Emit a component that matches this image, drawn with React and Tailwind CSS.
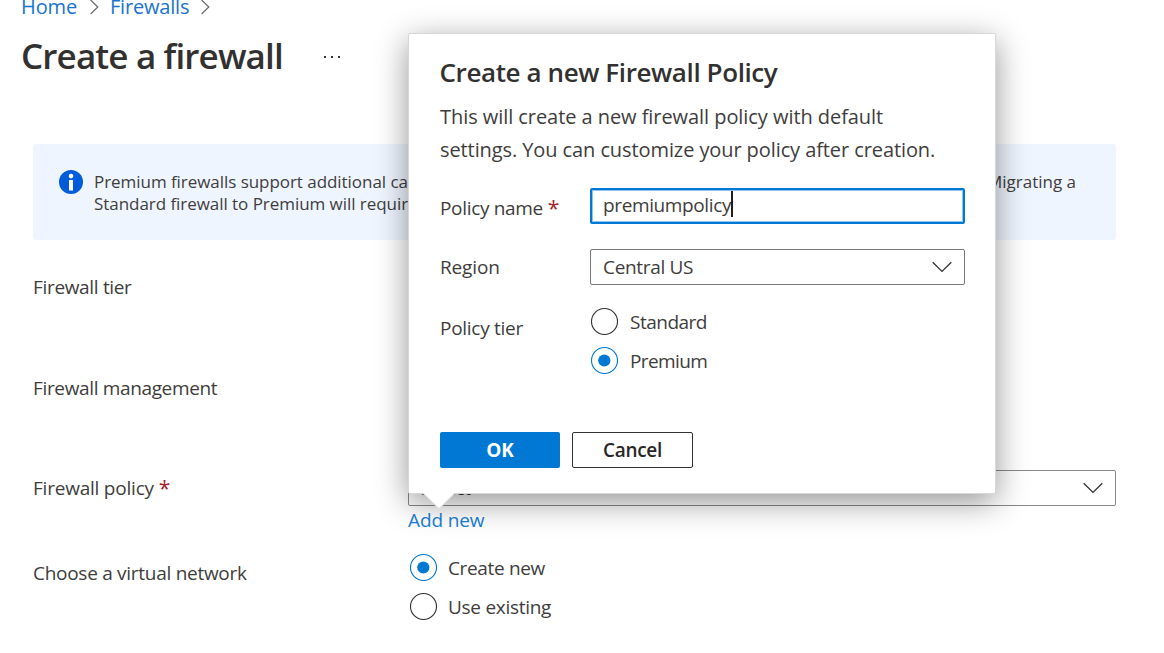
import React from "react";

function Radio({ checked, label, labelClass }) {
  return (
    <label className="flex h-[39px] items-center">
      <svg className="-mt-[1px] h-[28px] w-[28px] shrink-0" viewBox="0 0 28 28" fill="none">
        <circle cx="14.5" cy="14.5" r="13" fill="#fff" stroke={checked ? "#0078d4" : "#323130"} strokeWidth="1.1" />
        {checked && <circle cx="14.3" cy="14.5" r="6.1" fill="#0078d4" />}
      </svg>
      <span className={labelClass}>{label}</span>
    </label>
  );
}

function ChevronDown() {
  return (
    <svg className="h-[12px] w-[20px] shrink-0" viewBox="0 0 20 12" fill="none">
      <path d="M0.7 1.2 L10 10.4 L19.3 1.2" stroke="#323130" strokeWidth="1.3" />
    </svg>
  );
}

function ChevronRight() {
  return (
    <svg className="h-[16px] w-[9px] shrink-0" viewBox="0 0 9 16" fill="none">
      <path d="M0.6 1 L7.8 8 L0.6 15" stroke="#6b6966" strokeWidth="1.2" />
    </svg>
  );
}

function Dialog() {
  return (
    <div className="absolute top-[33px] left-[408px] h-[461px] w-[588px] rounded-[2px] border border-[#d8d8d8] bg-white pl-[31px] shadow-[0_8px_32px_rgba(0,0,0,0.42)]">
      <h2 className="mt-[20px] -ml-[0.5px] h-[36px] text-[26px] leading-[36px] font-semibold tracking-[-0.4px] whitespace-nowrap text-[#323130]">
        Create a new Firewall Policy
      </h2>
      <p className="mt-[10px] text-[20px] leading-[33px] whitespace-nowrap">
        <span className="block tracking-[-0.06px]">This will create a new firewall policy with default</span>
        <span className="block tracking-[-0.09px]">settings. You can customize your policy after creation.</span>
      </p>

      <div className="mt-[22px] flex h-[36px] items-center">
        <div className="flex w-[150px] items-center gap-[5px] pt-[3px]">
          <span className="tracking-[-0.33px]">Policy name</span>
          <span className="text-[21px] text-[#a4262c]">*</span>
        </div>
        <div className="flex h-[36px] w-[375px] items-center rounded-[2px] border-2 border-[#0078d4] bg-white pl-[11px] shadow-[inset_0_0_0_1px_#8fc3ec]">
          <span className="-mt-[3px] tracking-[-0.38px]">premiumpolicy</span>
          <span className="-mt-[4px] h-[26px] w-[2px] bg-[#201f1e]" />
        </div>
      </div>

      <div className="mt-[25px] flex h-[36px] items-center">
        <span className="w-[150px] tracking-[-0.15px]">Region</span>
        <div className="flex h-[36px] w-[375px] items-center justify-between rounded-[2px] border border-[#7a7876] bg-white pr-[12px] pl-[12px]">
          <span className="tracking-[-0.33px]">Central US</span>
          <ChevronDown />
        </div>
      </div>

      <div className="mt-[17px] flex">
        <span className="w-[150px] pt-[13px] tracking-[-0.28px]">Policy tier</span>
        <div>
          <Radio label="Standard" labelClass="ml-[12px] tracking-[-0.5px]" />
          <Radio checked label="Premium" labelClass="ml-[12px] tracking-[-0.6px]" />
        </div>
      </div>

      <div className="mt-[52px] flex gap-3 font-semibold">
        <button className="h-[36px] w-[120px] rounded-[2px] bg-[#0078d4] font-bold text-white">OK</button>
        <button className="h-[36px] w-[121px] rounded-[2px] border border-[#323130] bg-white tracking-[-0.3px] text-[#292827]">Cancel</button>
      </div>

      <svg className="absolute top-[457px] left-[13px] h-[19px] w-[34px]" viewBox="0 0 34 19">
        <path d="M0 0 H34 L32.5 2.5 L17 17.8 L1.5 2.5 Z" fill="#fff" />
        <path d="M1.5 2.5 L17 17.8 L32.5 2.5" fill="none" stroke="#dcdcdc" strokeWidth="1.1" />
      </svg>
    </div>
  );
}

export default function App() {
  return (
    <div className="relative h-[653px] w-[1164px] overflow-hidden bg-white font-['Open_Sans','Noto_Sans',sans-serif] text-[19px] leading-[26px] text-[#3e3d3c]">
      <nav className="-mt-[7px] flex h-[27px] items-center pl-[21px] text-[20px] text-[#1874cf]">
        <a className="w-[69px] tracking-[-0.1px]">Home</a>
        <ChevronRight />
        <a className="ml-[11px] w-[91px] tracking-[-0.2px]">Firewalls</a>
        <ChevronRight />
      </nav>

      <header className="mt-[12px] flex h-[48px] items-center pl-[21px]">
        <h1 className="w-[303px] text-[35px] leading-[48px] font-semibold tracking-[-0.85px] whitespace-nowrap text-[#323130]">
          Create a firewall
        </h1>
        <div className="mt-[2px] flex gap-[5px]">
          <span className="h-[2px] w-[2px] bg-[#323130]" />
          <span className="h-[2px] w-[2px] bg-[#323130]" />
          <span className="h-[2px] w-[2px] bg-[#323130]" />
        </div>
      </header>

      <section className="mt-[64px] ml-[33px] flex h-[96px] w-[1083px] rounded-[3px] bg-[#eff5ff] pt-[26px] pl-[26px] text-[17px] leading-[22px]">
        <svg className="h-[24px] w-[24px] shrink-0" viewBox="0 0 24 24">
          <circle cx="12" cy="12" r="12" fill="#015cda" />
          <circle cx="12" cy="6.1" r="2.3" fill="#fff" />
          <rect x="10" y="10" width="4" height="10.5" fill="#fff" />
        </svg>
        <div className="mt-px ml-[11px] w-[982px] whitespace-nowrap">
          <div className="flex justify-between">
            <span className="tracking-[-0.05px]">
              Premium firewalls support additional capabilities, such as SSL termination and IDPS.
            </span>
            <span>Migrating a</span>
          </div>
          <div className="tracking-[-0.05px]">Standard firewall to Premium will require some down-time.</div>
        </div>
      </section>

      <main className="pl-[33px]">
        <div className="mt-[34px] tracking-[-0.33px]">Firewall tier</div>
        <div className="mt-[75px] tracking-[-0.35px]">Firewall management</div>

        <div className="mt-[69px] flex h-[36px] items-center">
          <div className="flex w-[375px] items-center gap-[5px]">
            <span className="tracking-[-0.22px]">Firewall policy</span>
            <span className="text-[21px] text-[#a4262c]">*</span>
          </div>
          <div className="flex h-[36px] w-[708px] items-center justify-between rounded-[2px] border border-[#8a8886] bg-white pr-[12px] pl-[12px]">
            <span className="tracking-[-0.5px]">Select</span>
            <ChevronDown />
          </div>
        </div>
        <a className="mt-[1px] ml-[375px] block tracking-[-0.12px] text-[#1a80d6]">Add new</a>

        <div className="mt-[15px] flex">
          <span className="w-[376px] pt-[12px] tracking-[-0.28px]">Choose a virtual network</span>
          <div>
            <Radio checked label="Create new" labelClass="ml-[11px] tracking-[-0.35px]" />
            <Radio label="Use existing" labelClass="ml-[11px] tracking-[-0.28px]" />
          </div>
        </div>
      </main>

      <Dialog />
    </div>
  );
}
